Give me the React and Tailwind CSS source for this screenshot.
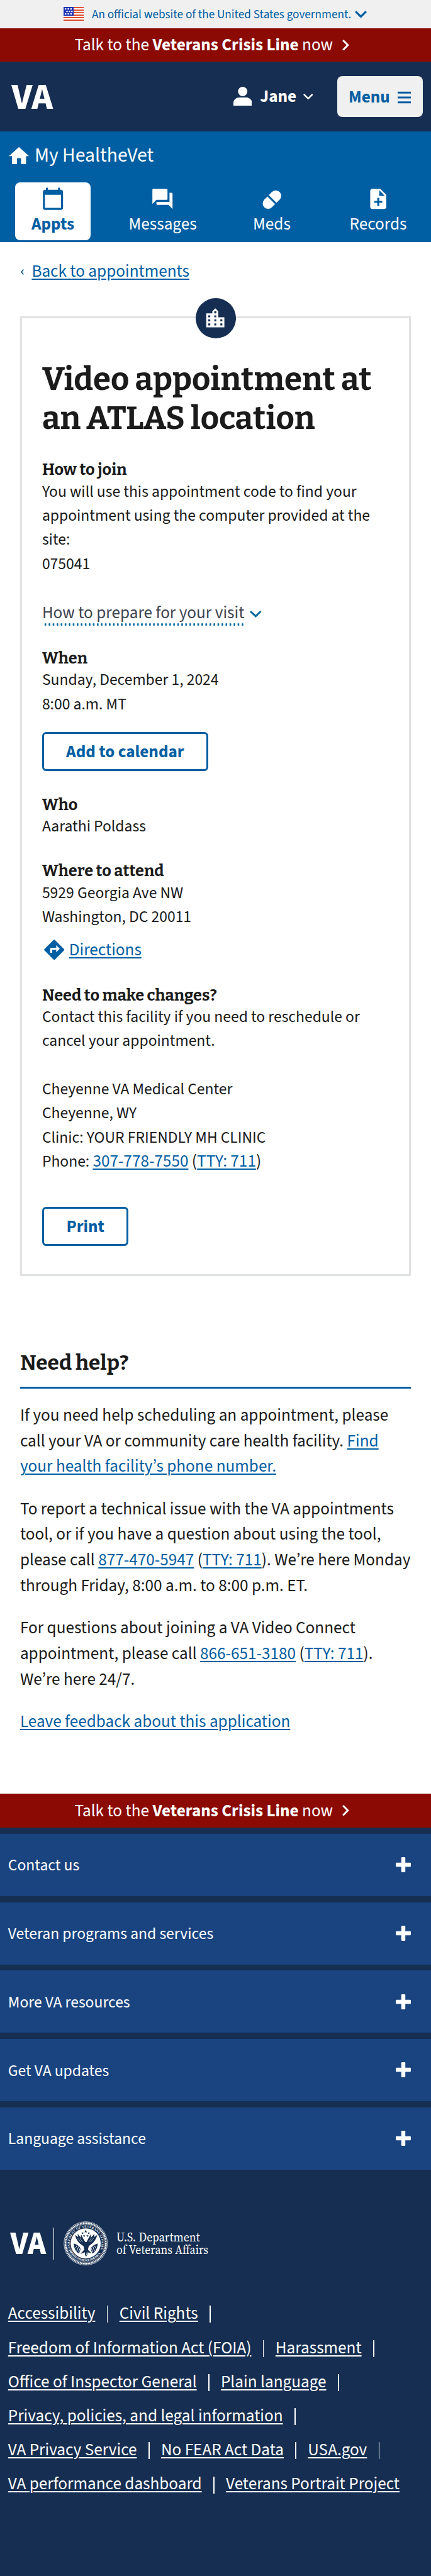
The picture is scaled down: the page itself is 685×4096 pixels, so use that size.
const sans = "font-['Source_Sans_3','Noto_Sans_CJK_SC','Noto_Sans',sans-serif]";
const slab = "font-['Bitter','Roboto_Serif','DejaVu_Serif',serif]";

function Link({ children, className = 'text-[#005ea2]' }) {
  return (
    <a href="#" className={`underline decoration-[1.6px] underline-offset-[3px] ${className}`}>
      {children}
    </a>
  );
}

function Icon({ d, className = '' }) {
  return (
    <svg viewBox="0 0 24 24" fill="currentColor" className={`size-[38.4px] shrink-0 ${className}`}>
      <path d={d} />
    </svg>
  );
}

function ChevronDown({ className }) {
  return (
    <svg viewBox="6 8.59 12 7.41" preserveAspectRatio="none" fill="currentColor" className={`shrink-0 ${className}`}>
      <path d="M16.59 8.59L12 13.17 7.41 8.59 6 10l6 6 6-6z" />
    </svg>
  );
}

function Wordmark({ className = '', width, height }) {
  return (
    <svg width={width} height={height} className={`shrink-0 overflow-visible ${className}`}>
      <text
        x="-0.5"
        y={height}
        fill="#fff"
        fontSize={height / 0.66}
        fontWeight="800"
        textLength={width + 1.5}
        lengthAdjust="spacingAndGlyphs"
      >
        VA
      </text>
    </svg>
  );
}

const icons = {
  home: 'M10 20v-6h4v6h5v-8h3L12 3 2 12h3v8z',
  calendar: 'M20 3h-1V1h-2v2H7V1H5v2H4c-1.1 0-2 .9-2 2v16c0 1.1.9 2 2 2h16c1.1 0 2-.9 2-2V5c0-1.1-.9-2-2-2zm0 18H4V8h16v13z',
  forum: 'M21 6h-2v9H6v2c0 .55.45 1 1 1h11l4 4V7c0-.55-.45-1-1-1zm-4 6V3c0-.55-.45-1-1-1H3c-.55 0-1 .45-1 1v14l4-4h10c.55 0 1-.45 1-1z',
  noteAdd: 'M14 2H6c-1.1 0-1.99.9-1.99 2L4 20c0 1.1.89 2 1.99 2H18c1.1 0 2-.9 2-2V8l-6-6zm2 14h-3v3h-2v-3H8v-2h3v-3h2v3h3v2zm-3-7V3.5L18.500 9H13z',
  city: 'M15 11V5l-3-3-3 3v2H3v14h18V11h-6zm-8 8H5v-2h2v2zm0-4H5v-2h2v2zm0-4H5V9h2v2zm6 8h-2v-2h2v2zm0-4h-2v-2h2v2zm0-4h-2V9h2v2zm0-4h-2V5h2v2zm6 12h-2v-2h2v2zm0-4h-2v-2h2v2z',
  directions: 'M21.710 11.290l-9-9c-.39-.39-1.020-.39-1.410 0l-9 9c-.39.39-.39 1.020 0 1.410l9 9c.39.39 1.020.39 1.410 0l9-9c.39-.38.39-1.010 0-1.410zM14 14.500V12h-4v3H8v-4c0-.55.45-1 1-1h5V7.500l3.500 3.500-3.500 3.500z',
};

function Flag() {
  return (
    <svg viewBox="0 0 20 14" preserveAspectRatio="none" className="h-[22.4px] w-8 shrink-0">
      <path fill="#fff" d="M0 0h20v14H0z" />
      <path fill="#db3e1f" d="M0 0h20v1.1H0zM0 2.600h20v1.1H0zM0 5.200h20v1.100H0zM0 7.600h20v1.100H0zM0 10h20v1.1H0zM0 12.700h20v1.100H0z" />
      <path fill="#1e33b1" d="M0 0h10v9H0z" />
      <path fill="#fff" d="M1.300 1.300h1.400v1.400H1.300zM4 1.300h1.400v1.400H4zM6.700 1.300h1.400v1.400H6.700zM2.700 3.800h1.400v1.400H2.700zM5.200 3.800h1.400v1.400H5.200zM7.600 3.800h1.400v1.400H7.600zM1.300 6.300h1.400v1.400H1.300zM4 6.300h1.400v1.400H4zM6.700 6.300h1.400v1.400H6.700z" />
    </svg>
  );
}

function CrisisLine() {
  return (
    <div className="flex h-[53.6px] items-center bg-[#8b0a03] pl-[118.4px] text-[27.2px] leading-[38.4px] text-white">
      <span className="pt-[1.5px] whitespace-nowrap">
        Talk to the <b className="font-bold">Veterans Crisis Line</b> now
      </span>
      <svg viewBox="8.59 6 7.41 12" fill="currentColor" className="ml-[14.5px] h-[17.6px] w-[11px]">
        <path d="M10 6L8.590 7.410 13.170 12l-4.580 4.590L10 18l6-6z" />
      </svg>
    </div>
  );
}

function Header() {
  return (
    <header className="flex h-[110.3px] items-center bg-[#162e51] pr-[12.6px] pl-[19.2px] text-[27.2px] font-bold text-white">
      <Wordmark width={64} height={39.2} />
      <svg viewBox="0 0 29.500 30" fill="currentColor" className="ml-auto h-[30px] w-[29.5px] -translate-y-px">
        <circle cx="14.750" cy="7.400" r="7.400" />
        <path d="M0 30v-4.500C0 20 5 17 9.500 17H20c4.500 0 9.500 3 9.500 8.500V30z" />
      </svg>
      <span className="ml-[13.3px] w-[56.5px] pt-px leading-[38.4px]">Jane</span>
      <ChevronDown className="ml-[12.2px] h-[9.6px] w-[15.6px]" />
      <button className="ml-[38.4px] flex h-[65px] w-[136.4px] items-center rounded-[8px] bg-[#f0f0f0] pl-[18px] text-[#005ea2]">
        <span className="w-[67px] pt-[2.500px] text-left leading-[38.4px]">Menu</span>
        <svg viewBox="0 0 21 19" fill="currentColor" className="ml-[11px] h-[19px] w-[21px] translate-y-[1.500px]">
          <path d="M0 0h21v3.200H0zM0 7.900h21v3.200H0zM0 15.800h21V19H0z" />
        </svg>
      </button>
    </header>
  );
}

function Nav() {
  return (
    <nav className="h-44 bg-[#005ea2] pt-[20.4px] text-white">
      <div className="flex h-[38.4px] items-center gap-[5.3px] pl-[11.2px]">
        <Icon d={icons.home} />
        <span className="text-[31.7px] leading-[38.4px]">My HealtheVet</span>
      </div>
      <div className="mt-[22.9px] flex pl-6 text-[27.2px] leading-[38.4px]">
        <div className="flex h-[91.8px] w-[120px] flex-col items-center rounded-[8px] bg-white pt-[6.3px] font-bold text-[#005ea2]">
          <Icon d={icons.calendar} />
          <span className="mt-[3px]">Appts</span>
        </div>
        <div className="ml-[34.600px] flex h-[91.8px] w-40 flex-col items-center pt-[6.3px]">
          <Icon d={icons.forum} />
          <span className="mt-[3px]">Messages</span>
        </div>
        <div className="ml-[38.4px] flex h-[91.8px] w-[110px] flex-col items-center pt-[6.3px]">
          <svg viewBox="-19.200 -19.200 38.400 38.400" fill="currentColor" className="size-[38.4px]">
            <g transform="translate(0 1.200) rotate(-45)">
              <path d="M1.500 -8.600H8.600A8.600 8.600 0 0 1 8.600 8.600H1.500z" />
              <path d="M-1.500 -8.600H-8.600A8.600 8.600 0 0 0 -8.600 8.600H-1.500z" />
            </g>
          </svg>
          <span className="mt-[3px]">Meds</span>
        </div>
        <div className="ml-[44px] flex h-[91.8px] w-[140px] flex-col items-center pt-[6.3px]">
          <Icon d={icons.noteAdd} />
          <span className="mt-[3px]">Records</span>
        </div>
      </div>
    </nav>
  );
}

function Heading({ children, className }) {
  return (
    <h2 className={`${slab} text-[25.3px] leading-[30.7px] font-bold ${className}`}>
      <span className="relative top-[0.9px]">{children}</span>
    </h2>
  );
}

function Button({ children, className }) {
  return (
    <button
      className={`flex h-[62px] items-center justify-center rounded-[6.4px] border-[3.200px] border-[#005ea2] bg-white pt-[3px] text-[27.2px] leading-[38.4px] font-bold text-[#005ea2] ${className}`}
    >
      {children}
    </button>
  );
}

function Card() {
  return (
    <section className="relative mt-[51.4px] h-[1526.8px] border-[3px] border-[#dfe1e2] px-8 pt-[66.4px] text-[25.6px] leading-[38.38px]">
      <div className="absolute top-[-31.900px] left-1/2 flex size-16 -translate-x-1/2 items-center justify-center rounded-full bg-[#162e51] text-white">
        <Icon d={icons.city} />
      </div>
      <h1 className={`${slab} text-[50.9px] leading-[62px] font-bold`}>
        Video appointment at
        <br />
        an ATLAS location
      </h1>
      <Heading className="mt-[35.2px]">How to join</Heading>
      <p className="mt-[0.8px]">
        You will use this appointment code to find your
        <br />
        appointment using the computer provided at the
        <br />
        site:
        <br />
        075041
      </p>
      <div className="mt-[39.8px] flex items-center text-[27.2px] leading-[38.4px] text-[#3d4551]">
        <span>How to prepare for your visit</span>
        <ChevronDown className="mt-[2px] ml-[9px] h-[11px] w-[18.6px] text-[#00699e]" />
      </div>
      <div className="-mt-[3.200px] ml-[2.500px] h-[3.4px] w-[319px] bg-[radial-gradient(circle,#00699e_1.4px,transparent_1.800px)] bg-[length:6.4px_3.4px]" />
      <Heading className="mt-[36.5px]">When</Heading>
      <p className="mt-[0.4px]">
        Sunday, December 1, 2024
        <br />
        8:00 a.m. MT
      </p>
      <Button className="mt-[25px] w-[264px]">Add to calendar</Button>
      <Heading className="mt-[37.8px]">Who</Heading>
      <p className="mt-[0.4px]">Aarathi Poldass</p>
      <Heading className="mt-[36.2px]">Where to attend</Heading>
      <p className="mt-[0.4px]">
        5929 Georgia Ave NW
        <br />
        Washington, DC 20011
      </p>
      <div className="mt-[13.9px] flex h-[38.4px] items-center gap-[4.5px] text-[27.2px]">
        <Icon d={icons.directions} className="text-[#005ea2]" />
        <span className="pt-[1.400px]">
          <Link>Directions</Link>
        </span>
      </div>
      <Heading className="mt-[37.6px]">Need to make changes?</Heading>
      <p>
        Contact this facility if you need to reschedule or
        <br />
        cancel your appointment.
      </p>
      <p className="mt-[38.38px]">
        Cheyenne VA Medical Center
        <br />
        Cheyenne, WY
        <br />
        Clinic: YOUR FRIENDLY MH CLINIC
      </p>
      <p className="h-[38.4px]">
        Phone:{' '}
        <span className="text-[27.2px]">
          <Link>307-778-7550</Link> (<Link>TTY: 711</Link>)
        </span>
      </p>
      <Button className="mt-[52.3px] w-[137.6px]">Print</Button>
    </section>
  );
}

function Help() {
  return (
    <section className="mt-[116.9px] text-[27.2px] leading-[40.8px]">
      <h2 className={`${slab} border-b-[3px] border-[#005ea2] pb-[16.8px] text-[33.3px] leading-[42px] font-bold`}>
        Need help?
      </h2>
      <p className="mt-[22.6px] whitespace-nowrap">
        If you need help scheduling an appointment, please
        <br />
        call your VA or community care health facility. <Link>Find</Link>
        <br />
        <Link>your health facility’s phone number.</Link>
      </p>
      <p className="mt-[26.5px] whitespace-nowrap">
        To report a technical issue with the VA appointments
        <br />
        tool, or if you have a question about using the tool,
        <br />
        please call <Link>877-470-5947</Link> (<Link>TTY: 711</Link>). We’re here Monday
        <br />
        through Friday, 8:00 a.m. to 8:00 p.m. ET.
      </p>
      <p className="mt-[26.5px] whitespace-nowrap">
        For questions about joining a VA Video Connect
        <br />
        appointment, please call <Link>866-651-3180</Link> (<Link>TTY: 711</Link>).
        <br />
        We’re here 24/7.
      </p>
      <p className="mt-[26.5px]">
        <Link>Leave feedback about this application</Link>
      </p>
    </section>
  );
}

function Seal() {
  return (
    <svg viewBox="-50 -50 100 100" className="ml-[14.300px] size-[70.4px] shrink-0">
      <defs>
        <path id="seal-top" d="M-29.500 20.500A36 36 0 1 1 29.500 20.500" />
        <path id="seal-bottom" d="M-37.500 15A40.400 40.400 0 0 0 37.500 15" />
      </defs>
      <circle r="49" fill="none" stroke="#fff" strokeWidth="1" />
      <circle r="45.700" fill="none" stroke="#fff" strokeWidth="3.600" strokeDasharray="2.600 1" />
      <circle r="42.800" fill="none" stroke="#fff" strokeWidth="0.700" />
      <g fill="#fff" fontSize="6.800" fontWeight="700" className="font-['Liberation_Serif',serif]">
        <text>
          <textPath href="#seal-top" textLength="148">DEPARTMENT OF VETERANS AFFAIRS</textPath>
        </text>
        <text>
          <textPath href="#seal-bottom" startOffset="3" textLength="84">UNITED STATES OF AMERICA</textPath>
        </text>
      </g>
      <circle r="34" fill="#fff" />
      <g fill="#162e51">
        <path d="M-5 6C-12 2-21-5-24-19c4 3 5 3 7 5-1-4-1-6-1-8 3 5 5 6 7 9 0-3 0-4 1-7 2 5 4 8 6 12l3 5 3 0 3-6c2-4 4-6 6-11 1 3 1 4 1 7 2-3 5-5 8-9 0 3-1 5-1 8 2-2 4-3 7-5C23-6 14 2 7 6l-2 8c3 3 5 5 8 8-5 0-6-1-8-2 0 3-1 6-4 10-3-4-4-7-4-10-3 2-5 3-9 3 4-3 6-6 9-9z" />
        <path d="M-27 0c6 2 12 5 16 11l-4 12C-22 19-27 10-27 0zM27 0c-6 2-12 5-16 11l4 12C22 19 27 10 27 0z" />
        <path d="M0-31l1 2.500h2.600l-2 1.700.8 2.600L0-25.700l-2.400 1.500.8-2.600-2-1.700H-1zM-7-26l.8 2h2l-1.600 1.300.6 2L-7-22l-1.800 1.300.6-2-1.600-1.300h2zM7-26l.8 2h2l-1.600 1.300.6 2L7-22l-1.800 1.300.6-2-1.600-1.300h2zM-3.500-20l.8 2h2l-1.600 1.300.6 2-1.800-1.300-1.800 1.300.6-2-1.600-1.300h2zM4-20l.8 2h2l-1.600 1.300.6 2L4-16l-1.800 1.300.6-2-1.600-1.300h2z" />
      </g>
      <g stroke="#fff" strokeWidth="1.300" fill="none">
        <path d="M-29-9L-10 6M29-9L10 6" strokeWidth="2.800" />
        <path d="M-20 5l-3 6M-16 7l-4 10M-12 9l-4 11M20 5l3 6M16 7l4 10M12 9l4 11M-3 20l1 7M3 20l-1 7" />
        <path d="M-18-12l7 9M-13-12l6 9M18-12l-7 9M13-12l-6 9" strokeWidth="0.800" />
      </g>
    </svg>
  );
}

const accordions = [
  'Contact us',
  'Veteran programs and services',
  'More VA resources',
  'Get VA updates',
  'Language assistance',
];

const footerLinks = [
  ['Accessibility', 'Civil Rights'],
  ['Freedom of Information Act (FOIA)', 'Harassment'],
  ['Office of Inspector General', 'Plain language'],
  ['Privacy, policies, and legal information'],
  ['VA Privacy Service', 'No FEAR Act Data', 'USA.gov'],
  ['VA performance dashboard', 'Veterans Portrait Project'],
];

function Footer() {
  return (
    <footer className="h-[1190.100px] bg-[#162e51] pt-[10px] text-white">
      <div className="flex flex-col gap-[9.6px]">
        {accordions.map((label) => (
          <button
            key={label}
            className="flex h-[99.1px] items-center justify-between bg-[#1a4480] pr-8 pl-[12.8px] text-[25.6px] leading-[38.4px]"
          >
            <span className="pt-[2.500px]">{label}</span>
            <svg viewBox="0 0 24 24" fill="currentColor" className="size-6">
              <rect x="8.800" width="6.400" height="24" rx="1.300" />
              <rect y="8.800" width="24" height="6.400" rx="1.300" />
            </svg>
          </button>
        ))}
      </div>
      <div className="mt-[82.500px] flex h-[70.4px] items-center pl-[17.300px]">
        <Wordmark width={55} height={34.2} className="-translate-y-[0.5px]" />
        <div className="ml-[13.2px] h-[50.5px] w-px bg-white" />
        <Seal />
        <svg
          width="147"
          height="44"
          fill="#fff"
          fontSize="20.400"
          className="ml-[13.5px] -translate-y-[1px] overflow-visible font-['Source_Serif_4','Liberation_Serif',serif]"
        >
          <text y="19.700" textLength="132.500" lengthAdjust="spacingAndGlyphs">U.S. Department</text>
          <text y="40" textLength="146" lengthAdjust="spacingAndGlyphs">of Veterans Affairs</text>
        </svg>
      </div>
      <div className="mt-[49.700px] pl-[12.8px] text-[27.2px] leading-[54.22px]">
        {footerLinks.map((row, r) => (
          <div key={row[0]} className="flex h-[54.22px] items-center whitespace-nowrap">
            {row.map((label, i) => (
              <span key={label} className="flex items-center">
                <Link className="text-white">{label}</Link>
                {r === footerLinks.length - 1 && i === row.length - 1 ? null : (
                  <span className="mx-[18.4px] mt-px h-[27px] w-[1.6px] bg-white" />
                )}
              </span>
            ))}
          </div>
        ))}
      </div>
    </footer>
  );
}

export default function App() {
  return (
    <div className={`${sans} h-[4096px] w-[685px] overflow-hidden bg-white text-[#1b1b1b]`}>
      <div className="flex h-[44.8px] items-center bg-[#f0f0f0] pl-[101px] text-[19.2px] leading-[28px] text-[#005ea2]">
        <Flag />
        <span className="ml-[13px] pt-[2px] whitespace-nowrap">An official website of the United States government.</span>
        <ChevronDown className="ml-[6px] h-[11.8px] w-[19px]" />
      </div>
      <CrisisLine />
      <Header />
      <Nav />
      <main className="h-[2467.6px] px-[31.900px] pt-[28.2px]">
        <div className="flex h-[38.4px] items-center text-[27.2px] leading-[38.4px]">
          <svg viewBox="0 0 5 9" fill="none" stroke="#005ea2" strokeWidth="1.500" className="ml-px h-[9px] w-[5px]">
            <path d="M4.300 .5L1 4.500l3.300 4" />
          </svg>
          <span className="ml-[12.500px]">
            <Link>Back to appointments</Link>
          </span>
        </div>
        <Card />
        <Help />
      </main>
      <CrisisLine />
      <Footer />
    </div>
  );
}
